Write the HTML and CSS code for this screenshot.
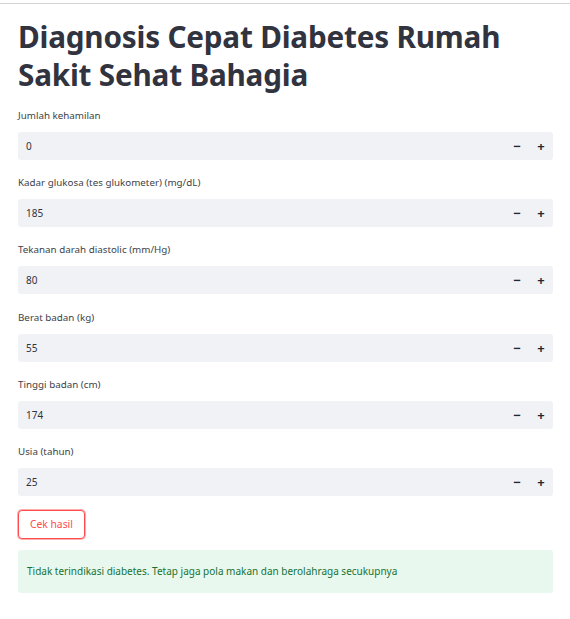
FILE: index.html
```html
<!DOCTYPE html>
<html lang="id">
<head>
<meta charset="utf-8">
<title>Diagnosis Cepat Diabetes</title>
<link rel="stylesheet" href="styles.css">
</head>
<body>
<div class="topline"></div>
<main class="main">
  <h1 class="title">Diagnosis Cepat Diabetes Rumah Sakit Sehat Bahagia</h1>
  <div class="fields">
    <div class="field">
      <label class="label">Jumlah kehamilan</label>
      <div class="numinput"><span class="value">0</span><div class="steps"><span class="step">&#8722;</span><span class="step">+</span></div></div>
    </div>
    <div class="field">
      <label class="label">Kadar glukosa (tes glukometer) (mg/dL)</label>
      <div class="numinput"><span class="value">185</span><div class="steps"><span class="step">&#8722;</span><span class="step">+</span></div></div>
    </div>
    <div class="field">
      <label class="label">Tekanan darah diastolic (mm/Hg)</label>
      <div class="numinput"><span class="value">80</span><div class="steps"><span class="step">&#8722;</span><span class="step">+</span></div></div>
    </div>
    <div class="field">
      <label class="label">Berat badan (kg)</label>
      <div class="numinput"><span class="value">55</span><div class="steps"><span class="step">&#8722;</span><span class="step">+</span></div></div>
    </div>
    <div class="field">
      <label class="label">Tinggi badan (cm)</label>
      <div class="numinput"><span class="value">174</span><div class="steps"><span class="step">&#8722;</span><span class="step">+</span></div></div>
    </div>
    <div class="field">
      <label class="label">Usia (tahun)</label>
      <div class="numinput"><span class="value">25</span><div class="steps"><span class="step">&#8722;</span><span class="step">+</span></div></div>
    </div>
  </div>
  <button class="btn">Cek hasil</button>
  <div class="alert">Tidak terindikasi diabetes. Tetap jaga pola makan dan berolahraga secukupnya</div>
</main>
</body>
</html>
```

FILE: styles.css
```css
html, body {
  margin: 0;
  padding: 0;
  background: #ffffff;
}
body {
  font-family: "Noto Sans", "Open Sans", sans-serif;
  color: #31333f;
  width: 570px;
  height: 619px;
  overflow: hidden;
}
.topline {
  margin-top: 3px;
  height: 1px;
  background: #d4d4d4;
}
.main {
  padding: 0 17px 0 18px;
}
.title {
  margin: 14px 0 0 0;
  font-size: 29.7px;
  line-height: 38px;
  font-weight: 700;
  letter-spacing: -0.2px;
  color: #31333f;
  width: 500px;
}
.fields {
  margin-top: 15px;
  display: flex;
  flex-direction: column;
  gap: 16.2px;
}
.field {
  display: flex;
  flex-direction: column;
}
.label {
  font-size: 9.8px;
  line-height: 14px;
  height: 14px;
  margin-bottom: 9px;
  color: #3d3f4a;
}
.numinput {
  height: 28px;
  background: #f0f2f6;
  border-radius: 3px;
  display: flex;
  align-items: center;
  justify-content: space-between;
  padding-left: 8px;
}
.value {
  font-size: 10px;
  color: #31333f;
}
.steps {
  display: flex;
  height: 100%;
}
.step {
  width: 24px;
  display: flex;
  align-items: center;
  justify-content: center;
  font-size: 13px;
  font-weight: 700;
  color: #262730;
}
.btn {
  margin-top: 14px;
  display: block;
  height: 29px;
  padding: 0 11px;
  background: #ffffff;
  border: 1px solid #ff4b4b;
  border-radius: 4px;
  box-shadow: 0 0 0 1px rgba(255, 75, 75, 0.45);
  color: #ff4b4b;
  font-family: "Noto Sans", "Open Sans", sans-serif;
  font-size: 10.3px;
}
.alert {
  margin-top: 11px;
  height: 43px;
  display: flex;
  align-items: center;
  padding-left: 9px;
  background: #e9f8ee;
  border-radius: 3px;
  color: #177233;
  font-size: 10px;
}
```
